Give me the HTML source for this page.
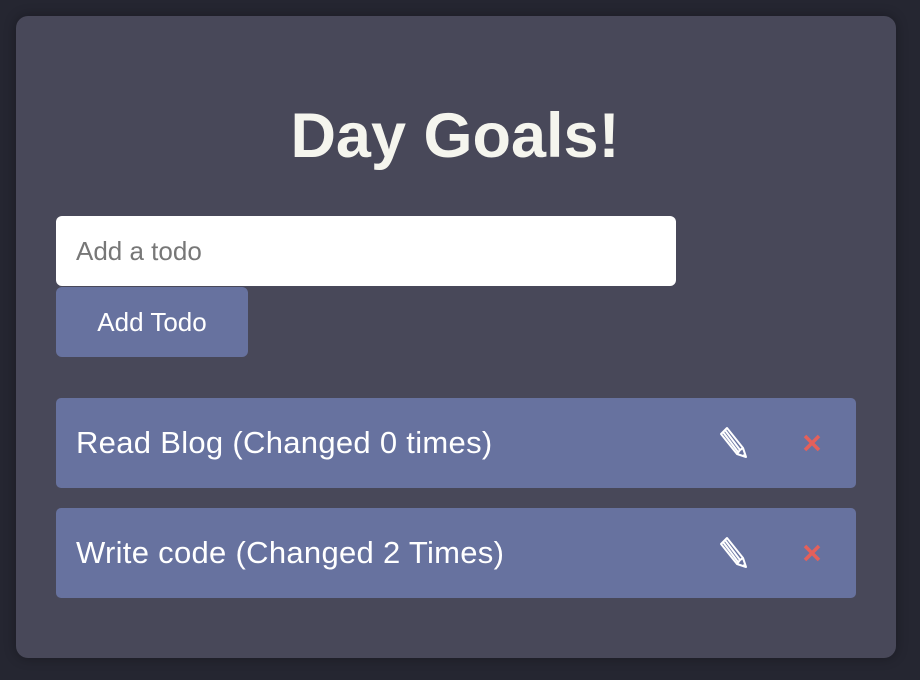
<!DOCTYPE html><html><head><style>
body{margin:0;width:920px;height:680px;background:#252631;font-family:"Liberation Sans",sans-serif;position:relative;overflow:hidden}
.card{position:absolute;left:16px;top:16px;width:880px;height:642px;background:#484859;border-radius:12px;box-shadow:0 0 12px rgba(0,0,0,.3)}
h1{position:absolute;left:0;width:910px;top:101px;margin:0;text-align:center;color:#f5f5ee;font-size:63px;font-weight:bold;line-height:70px;letter-spacing:0px}
.in{position:absolute;left:56px;top:216px;width:620px;height:70px;background:#fff;border-radius:6px;color:#777;font-size:26px;line-height:70px;padding-left:20px;box-sizing:border-box}
.btn{position:absolute;left:56px;top:287px;width:192px;height:70px;background:#67729f;border-radius:6px;color:#fff;font-size:26px;line-height:70px;text-align:center}
.item{position:absolute;left:56px;width:800px;height:90px;background:#67729f;border-radius:5px;color:#fff;font-size:31px;letter-spacing:0.3px;line-height:90px;padding-left:20px;box-sizing:border-box}
.p{position:absolute;left:662px;top:28px}
.x{position:absolute;left:747px;top:36px}
</style></head><body>
<div class="card"></div>
<h1>Day Goals!</h1>
<div class="in">Add a todo</div>
<div class="btn">Add Todo</div>
<div class="item" style="top:398px">Read Blog (Changed 0 times)<svg class="p" width="32" height="34" viewBox="0 0 32 34"><g fill="none" stroke="#fff" stroke-width="2" stroke-linejoin="round"><path d="M3 8 L9 2 L25 22 L28 31 L19 28 Z"/><path d="M7 4 L22 24 M5 6 L20 26 M22 24 L19 28 M22 24 L25 22"/></g><path d="M25.5 28 L28 31 L24.5 30 Z" fill="#fff"/></svg><svg class="x" width="18" height="18" viewBox="0 0 18 18"><path d="M2 2 L16 16 M16 2 L2 16" stroke="#e4605a" stroke-width="3.5"/></svg></div>
<div class="item" style="top:508px">Write code (Changed 2 Times)<svg class="p" width="32" height="34" viewBox="0 0 32 34"><g fill="none" stroke="#fff" stroke-width="2" stroke-linejoin="round"><path d="M3 8 L9 2 L25 22 L28 31 L19 28 Z"/><path d="M7 4 L22 24 M5 6 L20 26 M22 24 L19 28 M22 24 L25 22"/></g><path d="M25.5 28 L28 31 L24.5 30 Z" fill="#fff"/></svg><svg class="x" width="18" height="18" viewBox="0 0 18 18"><path d="M2 2 L16 16 M16 2 L2 16" stroke="#e4605a" stroke-width="3.5"/></svg></div>
</body></html>
